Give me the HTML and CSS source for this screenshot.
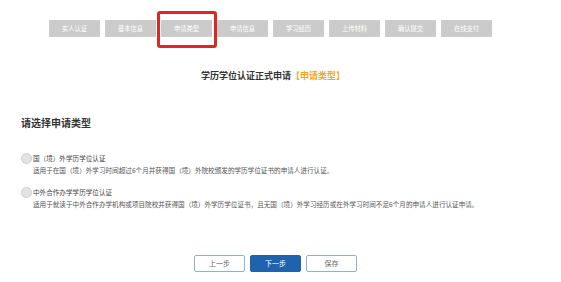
FILE: index.html
```html
<!DOCTYPE html>
<html lang="zh">
<head>
<meta charset="utf-8">
<link rel="stylesheet" href="styles.css">
</head>
<body>
<div class="page">
  <nav class="steps">
    <span class="step">实人认证</span>
    <span class="step">基本信息</span>
    <span class="step active">申请类型</span>
    <span class="step">申请信息</span>
    <span class="step">学习经历</span>
    <span class="step">上传材料</span>
    <span class="step">确认提交</span>
    <span class="step">在线支付</span>
  </nav>
  <h1 class="title">学历学位认证正式申请<span class="tag">【申请类型】</span></h1>
  <h2 class="heading">请选择申请类型</h2>
  <div class="options">
    <div class="option">
      <div class="label"><span class="radio"></span>国（境）外学历学位认证</div>
      <div class="desc">适用于在国（境）外学习时间超过6个月并获得国（境）外院校颁发的学历学位证书的申请人进行认证。</div>
    </div>
    <div class="option">
      <div class="label"><span class="radio"></span>中外合作办学学历学位认证</div>
      <div class="desc">适用于就读于中外合作办学机构或项目院校并获得国（境）外学历学位证书，且无国（境）外学习经历或在外学习时间不足6个月的申请人进行认证申请。</div>
    </div>
  </div>
  <div class="actions">
    <button class="btn">上一步</button>
    <button class="btn primary">下一步</button>
    <button class="btn">保存</button>
  </div>
</div>
</body>
</html>
```

FILE: styles.css
```css
html, body {
  margin: 0;
  padding: 0;
  background: #fff;
}
body {
  font-family: "Noto Sans CJK SC", "Noto Sans", sans-serif;
  color: #333;
}
.page {
  width: 561px;
  height: 282px;
  overflow: hidden;
}
.steps {
  display: flex;
  gap: 5px;
  padding-left: 49px;
  margin-top: 20px;
}
.step {
  position: relative;
  width: 51px;
  height: 17px;
  line-height: 17px;
  text-align: center;
  background: #cbcbcb;
  color: #fff;
  font-size: 6.3px;
  border-radius: 1px;
}
.step.active::after {
  content: "";
  position: absolute;
  left: -4px;
  right: -5px;
  top: -9px;
  bottom: -11px;
  border: 3px solid #e02622;
  border-radius: 3px;
}
.title {
  margin: 33px 0 0;
  padding-left: 201px;
  font-size: 9px;
  line-height: 12px;
  font-weight: bold;
  color: #333;
}
.tag {
  color: #f5a623;
}
.heading {
  margin: 34px 0 0;
  padding-left: 21px;
  font-size: 10px;
  line-height: 14px;
  font-weight: bold;
  color: #333;
}
.options {
  margin-top: 22px;
  padding-left: 21px;
  display: flex;
  flex-direction: column;
  gap: 10px;
}
.option {
  font-size: 6.6px;
  line-height: 12px;
}
.label {
  display: flex;
  align-items: center;
  color: #444;
}
.radio {
  width: 9px;
  height: 9px;
  border-radius: 50%;
  border: 0.5px solid #cfcfcf;
  background: #e3e3e3;
  margin-right: 1px;
}
.desc {
  padding-left: 12px;
  color: #555;
}
.actions {
  display: flex;
  gap: 5px;
  padding-left: 194px;
  margin-top: 45px;
}
.btn {
  width: 51px;
  height: 17px;
  padding: 0;
  border: 1px solid #8fb0d6;
  border-radius: 2px;
  background: #fff;
  color: #666;
  font-family: inherit;
  font-size: 7px;
  line-height: 15px;
}
.btn.primary {
  background: #1f63ae;
  border-color: #1f63ae;
  color: #fff;
}
```
